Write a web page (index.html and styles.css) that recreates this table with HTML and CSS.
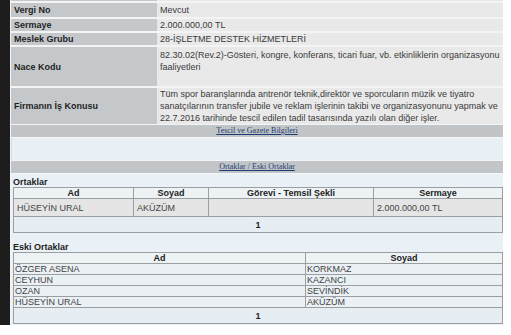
FILE: index.html
```html
<!DOCTYPE html>
<html lang="tr">
<head>
<meta charset="utf-8">
<title>Firma Bilgileri</title>
<link rel="stylesheet" href="styles.css">
</head>
<body>
<div class="page">
  <div class="strip"></div>
  <div class="content">
    <table class="info">
      <tr class="r0"><th></th><td></td></tr>
      <tr class="r1"><th>Vergi No</th><td>Mevcut</td></tr>
      <tr class="r2"><th>Sermaye</th><td>2.000.000,00 TL</td></tr>
      <tr class="r3"><th>Meslek Grubu</th><td>28-İŞLETME DESTEK HİZMETLERİ</td></tr>
      <tr class="r4"><th>Nace Kodu</th><td class="top">82.30.02(Rev.2)-Gösteri, kongre, konferans, ticari fuar, vb. etkinliklerin organizasyonu faaliyetleri</td></tr>
      <tr class="r5"><th>Firmanın İş Konusu</th><td>Tüm spor baranşlarında antrenör teknik,direktör ve sporcuların müzik ve tiyatro sanatçılarının transfer jubile ve reklam işlerinin takibi ve organizasyonunu yapmak ve 22.7.2016 tarihinde tescil edilen tadil tasarısında yazılı olan diğer işler.</td></tr>
    </table>
    <div class="bar"><a href="#">Tescil ve Gazete Bilgileri</a></div>
    <div class="blank"></div>
    <div class="bar"><a href="#">Ortaklar / Eski Ortaklar</a></div>
    <div class="partners">
      <div class="caption">Ortaklar</div>
      <table class="grid cur">
        <tr><th class="c1">Ad</th><th class="c2">Soyad</th><th class="c3">Görevi - Temsil Şekli</th><th>Sermaye</th></tr>
        <tr class="data"><td>HÜSEYİN URAL</td><td>AKÜZÜM</td><td></td><td>2.000.000,00 TL</td></tr>
        <tr class="pager"><td colspan="4">1</td></tr>
      </table>
      <div class="caption second">Eski Ortaklar</div>
      <table class="grid old">
        <tr><th class="o1">Ad</th><th>Soyad</th></tr>
        <tr class="row"><td>ÖZGER ASENA</td><td>KORKMAZ</td></tr>
        <tr class="row"><td>CEYHUN</td><td>KAZANCI</td></tr>
        <tr class="row"><td>OZAN</td><td>SEVİNDİK</td></tr>
        <tr class="row"><td>HÜSEYİN URAL</td><td>AKÜZÜM</td></tr>
        <tr class="pager"><td colspan="2">1</td></tr>
      </table>
    </div>
  </div>
</div>
</body>
</html>
```

FILE: styles.css
```css
* { box-sizing: border-box; }
html, body { margin: 0; padding: 0; background: #ffffff; }
body {
  font-family: "Liberation Sans", Arial, sans-serif;
  font-size: 9px;
  color: #333;
}
.page { display: flex; align-items: flex-start; }
.strip { width: 10px; height: 325px; background: #1d1d1d; flex: none; }
.content { width: 493px; background: #f3f4f5; padding-left: 1px; }

.info { width: 100%; border-collapse: separate; border-spacing: 0 2px; margin-top: -2px; margin-bottom: -1px; }
.info th, .info td { padding: 0 3px; line-height: 12px; vertical-align: middle; }
.info th { width: 146px; background: #c5c8cb; text-align: left; color: #1f1f1f; font-weight: bold; }
.info td { background: #e9e9e9; color: #3a3a3a; padding-left: 3px; }
.info td.top { vertical-align: top; padding-top: 2px; }
.info .r0 th, .info .r0 td { height: 1px; line-height: 1px; }
.info .r1 th, .info .r1 td { height: 14px; }
.info .r2 th, .info .r2 td { height: 12px; }
.info .r3 th, .info .r3 td { height: 12px; }
.info .r4 th, .info .r4 td { height: 39px; }
.info .r5 th, .info .r5 td { height: 36px; }

.bar {
  height: 13px;
  background: #c1c5c8;
  text-align: center;
  line-height: 12px;
  font-family: "Liberation Serif", "Times New Roman", serif;
  font-size: 8px;
  border-bottom: 1px solid #f5f7f8;
}
.bar a { color: #1e3c72; text-decoration: underline; }
.blank { height: 23px; background: #e8f0f5; border-bottom: 1px solid #f3f4f5; border-left: 1px solid #d6dde2; }

.partners { background: #e9f1f6; padding: 3px 0 2px 2px; height: 151px; }
.caption { font-weight: bold; color: #222; line-height: 10px; height: 10px; }
.caption.second { margin-top: 8px; height: 11px; line-height: 12px; }

.grid { width: 490px; border-collapse: collapse; color: #444; }
.grid th, .grid td { border: 1px solid #9c9fa2; padding: 0 3px; text-align: left; }
.grid th { text-align: center; font-weight: bold; color: #222; background: #edf2f5; height: 11px; line-height: 10px; }
.cur .c1 { width: 120px; }
.cur .c2 { width: 75px; }
.cur .c3 { width: 165px; }
.cur .data td { background: #e5e5e5; height: 18px; }
.pager td { background: #e6eef3; font-weight: bold; color: #222; height: 16px; text-align: center; }
.old .o1 { width: 292px; }
.old .row td { background: #eaf0f4; height: 11px; line-height: 10px; padding: 0 1px; }
.old .pager td { height: 16px; }
```
